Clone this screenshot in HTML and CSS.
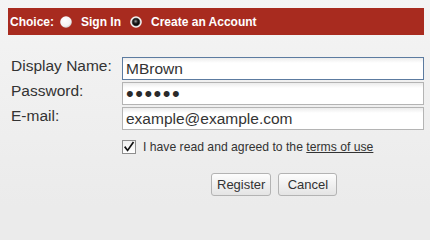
FILE: index.html
```html
<!DOCTYPE html>
<html>
<head>
<meta charset="utf-8">
<link rel="stylesheet" href="styles.css">
</head>
<body>
<div class="form">
  <div class="header">
    <span class="choice-label">Choice:</span>
    <span class="radio">
      <svg width="12" height="12" viewBox="0 0 12 12"><defs><radialGradient id="rw" cx="0.4" cy="0.35" r="0.7"><stop offset="0" stop-color="#ffffff"/><stop offset="0.7" stop-color="#f4f4f4"/><stop offset="1" stop-color="#c8c8c8"/></radialGradient></defs><circle cx="6" cy="6" r="5.8" fill="url(#rw)"/></svg>
    </span>
    <span class="opt">Sign In</span>
    <span class="radio">
      <svg width="12" height="12" viewBox="0 0 12 12"><defs><radialGradient id="rb" cx="0.45" cy="0.4" r="0.6"><stop offset="0" stop-color="#9a9a9a"/><stop offset="0.5" stop-color="#222222"/><stop offset="1" stop-color="#000000"/></radialGradient></defs><circle cx="6" cy="6" r="5.8" fill="#f4f4f4"/><circle cx="6" cy="6" r="4.3" fill="#555"/><circle cx="6" cy="6" r="3.4" fill="url(#rb)"/></svg>
    </span>
    <span class="opt">Create an Account</span>
  </div>

  <div class="fields">
    <div class="row">
      <label class="label">Display Name:</label>
      <input class="input focused" type="text" value="MBrown">
    </div>
    <div class="row">
      <label class="label">Password:</label>
      <input class="input" type="password" value="secret">
    </div>
    <div class="row">
      <label class="label">E-mail:</label>
      <input class="input" type="text" value="example@example.com">
    </div>
  </div>

  <div class="agree">
    <span class="checkbox">
      <svg width="12" height="12" viewBox="0 0 12 12"><path d="M2.2 6.3 L4.6 9.4 L10 1.8" fill="none" stroke="#111" stroke-width="1.7" stroke-linecap="square"/></svg>
    </span>
    <span class="agree-text">I have read and agreed to the <a class="terms" href="#">terms of use</a></span>
  </div>

  <div class="buttons">
    <button class="btn">Register</button>
    <button class="btn">Cancel</button>
  </div>
</div>
</body>
</html>
```

FILE: styles.css
```css
html {
  margin: 0;
  padding: 0;
  min-height: 100%;
  background: #ebebeb;
}
body {
  margin: 0;
  width: 430px;
  height: 206px;
  padding: 8px;
  box-sizing: border-box;
  background: linear-gradient(#f4f4f4, #ebebeb);
  font-family: "Liberation Sans", Arial, sans-serif;
  color: #333;
}
.form {
  width: 416px;
}
.header {
  height: 27px;
  background: #a82b1f;
  color: #fff;
  font-weight: bold;
  font-size: 12px;
  display: flex;
  align-items: center;
  padding-left: 2px;
}
.choice-label {
  margin-right: 6px;
}
.radio {
  display: flex;
  width: 12px;
  height: 12px;
  margin-right: 9px;
}
.opt {
  margin-right: 9px;
}
.fields {
  margin-top: 22px;
}
.row {
  display: flex;
  height: 23px;
  margin-bottom: 2px;
}
.label {
  width: 114px;
  padding-left: 3px;
  box-sizing: border-box;
  font-size: 15.5px;
  line-height: 18px;
  color: #333;
}
.input {
  width: 302px;
  height: 23px;
  box-sizing: border-box;
  margin: 0;
  border: 1px solid #b4b4b4;
  padding: 0 3px;
  font-family: "Liberation Sans", Arial, sans-serif;
  font-size: 15.5px;
  color: #333;
  background: linear-gradient(#ececec, #ffffff 5px);
  outline: none;
}
.input.focused {
  border-color: #5c7ba0;
}
.input[type="password"] {
  letter-spacing: 1.5px;
  font-size: 22px;
  color: #2a2a2a;
}
.agree {
  display: flex;
  align-items: center;
  margin-top: 8px;
  margin-left: 114px;
  height: 18px;
}
.checkbox {
  width: 14px;
  height: 14px;
  box-sizing: border-box;
  border: 1px solid #8e8e8e;
  background: linear-gradient(#f0f0f0, #ffffff);
  display: flex;
  align-items: center;
  justify-content: center;
  margin-right: 7px;
}
.agree-text {
  font-size: 12.2px;
  color: #333;
}
.terms {
  color: #333;
  text-decoration: underline;
}
.buttons {
  display: flex;
  gap: 7px;
  margin-top: 17px;
  margin-left: 203px;
}
.btn {
  height: 23px;
  min-width: 59px;
  box-sizing: border-box;
  padding: 0 5px;
  border: 1px solid #b3b3b3;
  border-radius: 3px;
  background: linear-gradient(#fdfdfd, #e4e4e4);
  font-family: "Liberation Sans", Arial, sans-serif;
  font-size: 13px;
  color: #333;
}
```
